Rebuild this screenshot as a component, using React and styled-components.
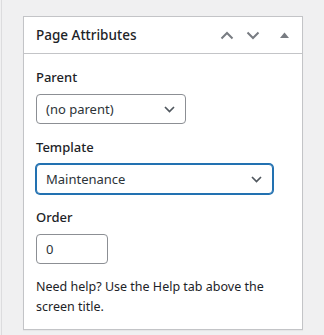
import styled, { createGlobalStyle } from 'styled-components';

const GlobalStyle = createGlobalStyle`
  html, body {
    margin: 0;
    padding: 0;
    background: #f0f0f1;
  }
  body {
    font-family: "Noto Sans", "Liberation Sans", sans-serif;
    font-size: 12.5px;
    color: #1d2327;
  }
`;

const Page = styled.div`
  width: 324px;
  height: 335px;
  box-sizing: border-box;
  border-left: 1px solid #dcdcde;
  margin-left: 1px;
  padding: 16px 0 0 21px;
`;

const Postbox = styled.div`
  width: 280px;
  box-sizing: border-box;
  background: #fff;
  border: 1px solid #c3c4c7;
  box-shadow: 0 1px 1px rgba(0, 0, 0, 0.04);
`;

const Header = styled.div`
  display: flex;
  align-items: center;
  height: 36px;
  border-bottom: 1px solid #c3c4c7;
`;

const Title = styled.h2`
  flex: 1;
  margin: 0;
  padding: 0 12px;
  font-size: 13.5px;
  font-weight: 500;
  line-height: 1.4;
  color: #1d2327;
`;

const HandleButton = styled.button`
  display: flex;
  align-items: center;
  justify-content: center;
  width: ${(p) => p.$w}px;
  height: 36px;
  padding: 0;
  margin: 0;
  border: 0;
  background: none;
  color: #787c82;
`;

const Inside = styled.div`
  padding: 0 12px 12px;
`;

const Label = styled.p`
  margin: 13px 0 7px;
  font-size: 13px;
  font-weight: 500;
  line-height: 20px;
`;

const SelectBox = styled.div`
  display: flex;
  align-items: center;
  justify-content: space-between;
  box-sizing: border-box;
  width: ${(p) => p.$w}px;
  height: 30px;
  padding: 0 10px 0 9px;
  border: 1px solid ${(p) => (p.$focus ? '#2271b1' : '#8c8f94')};
  box-shadow: ${(p) => (p.$focus ? '0 0 0 1px #2271b1' : 'none')};
  border-radius: 4px;
  background: #fff;
  color: #2c3338;
  font-size: 13px;
`;

const NumberInput = styled.div`
  display: flex;
  align-items: center;
  box-sizing: border-box;
  width: 72px;
  height: 30px;
  padding: 0 9px;
  border: 1px solid #8c8f94;
  border-radius: 4px;
  color: #2c3338;
  font-size: 13px;
`;

const Help = styled.p`
  margin: 13px 0 0;
  line-height: 20px;
`;

const Chevron = ({ up }) => (
  <svg width="14" height="9" viewBox="0 0 14 9">
    <polyline
      points={up ? '1.5,7.5 7,2 12.5,7.5' : '1.5,1.5 7,7 12.5,1.5'}
      fill="none"
      stroke="currentColor"
      strokeWidth="2"
    />
  </svg>
);

const Arrow = () => (
  <svg width="11" height="7" viewBox="0 0 11 7" style={{ display: 'block' }}>
    <polyline points="1,1 5.5,5.5 10,1" fill="none" stroke="#50575e" strokeWidth="1.7" />
  </svg>
);

const Triangle = () => (
  <svg width="9" height="6" viewBox="0 0 9 6">
    <polygon points="0,6 4.5,0.5 9,6" fill="currentColor" />
  </svg>
);

export default function App() {
  return (
    <>
      <GlobalStyle />
      <Page>
        <Postbox>
          <Header>
            <Title>Page Attributes</Title>
            <HandleButton $w={26}><Chevron up /></HandleButton>
            <HandleButton $w={26}><Chevron /></HandleButton>
            <HandleButton $w={36}><Triangle /></HandleButton>
          </Header>
          <Inside>
            <Label>Parent</Label>
            <SelectBox $w={150}>
              <span>(no parent)</span>
              <Arrow />
            </SelectBox>
            <Label>Template</Label>
            <SelectBox $w={237} $focus>
              <span>Maintenance</span>
              <Arrow />
            </SelectBox>
            <Label>Order</Label>
            <NumberInput>0</NumberInput>
            <Help>Need help? Use the Help tab above the screen title.</Help>
          </Inside>
        </Postbox>
      </Page>
    </>
  );
}
